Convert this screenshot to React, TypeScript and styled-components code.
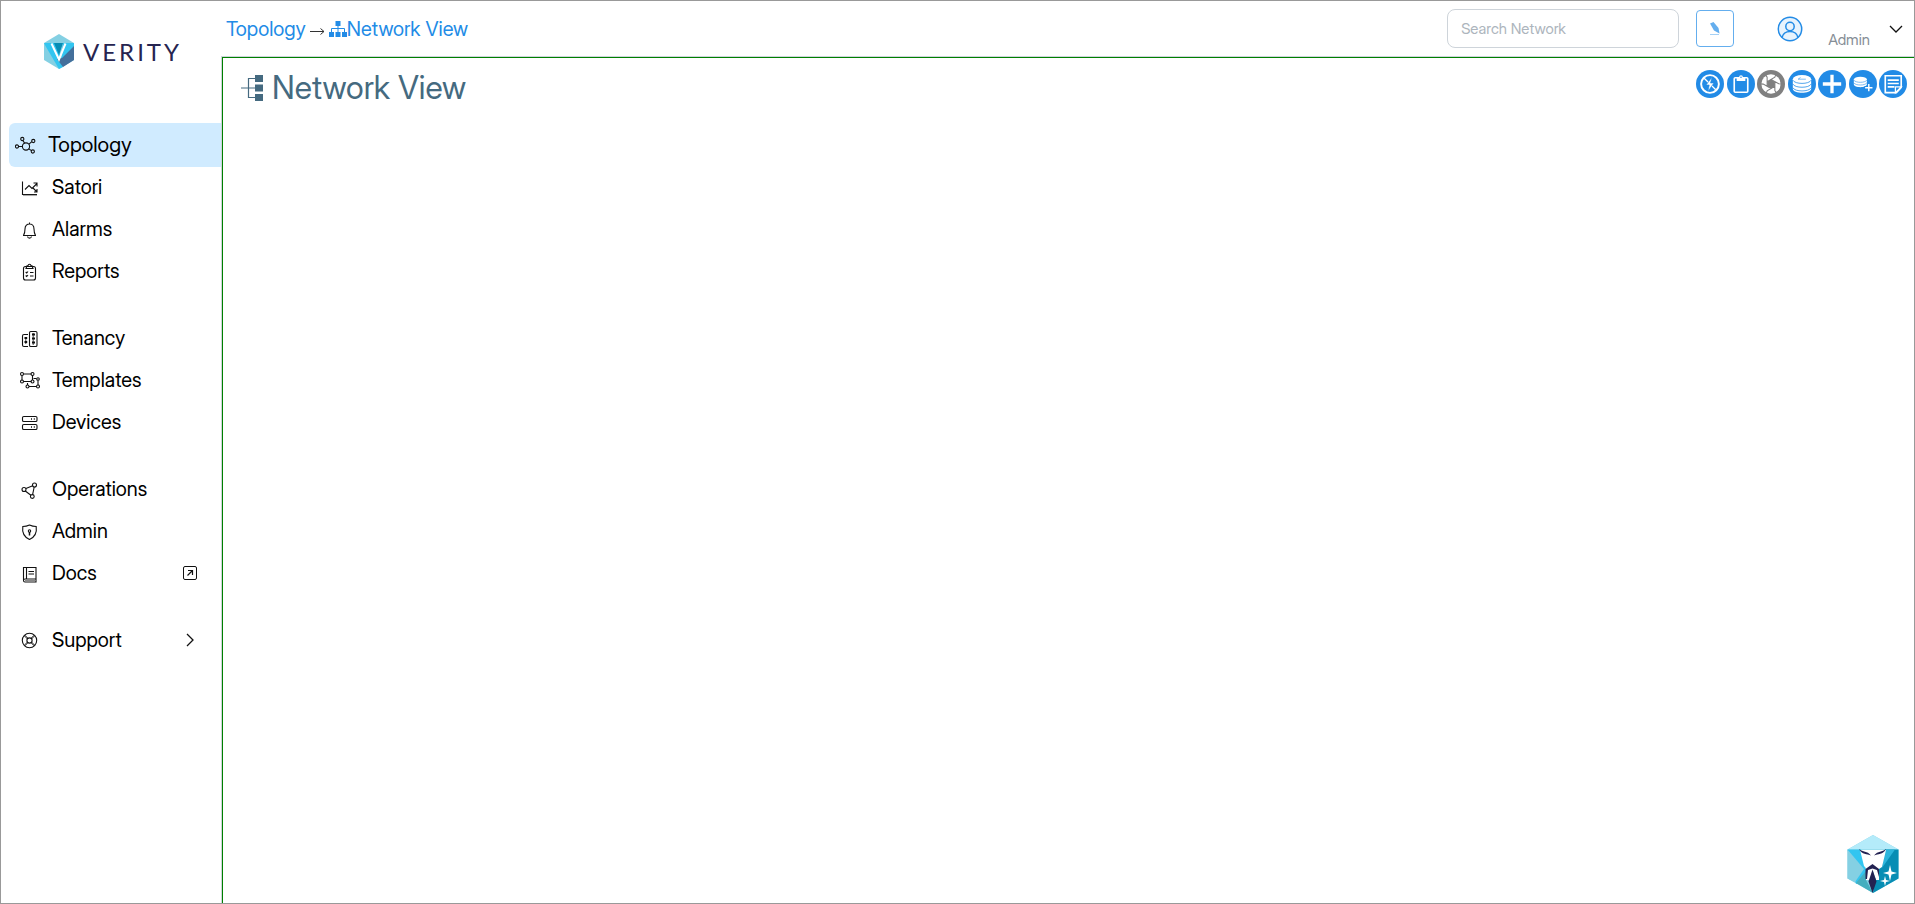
import React from "react";
import styled, { createGlobalStyle, css } from "styled-components";

const BLUE = "#228be6";

const GlobalStyle = createGlobalStyle`
  *, *::before, *::after { box-sizing: border-box; }
  body {
    margin: 0;
    background: #fff;
    color: #000;
    font-family: "Inter Display", Inter, "Liberation Sans", sans-serif;
    font-variation-settings: "opsz" 32;
  }
  a { color: inherit; text-decoration: none; }
  button { font: inherit; font-variation-settings: inherit; cursor: pointer; }
`;

const Shell = styled.div`
  display: flex;
  min-height: 100vh;
  border: 1px solid #999;
`;

const Sidebar = styled.aside`
  flex: 0 0 220px;
  padding-left: 8px;
`;

const Brand = styled.a`
  display: flex;
  align-items: center;
  gap: 9px;
  height: 123px;
  padding: 0 0 22px 35px;
`;

const BrandName = styled.span`
  color: #262450;
  font-family: Lato, sans-serif;
  font-size: 24px;
  letter-spacing: 3px;
  line-height: 32px;
`;

const NavList = styled.ul`
  margin: 0 0 25px;
  padding: 0;
  list-style: none;
`;

const NavLink = styled.a<{ $active?: boolean }>`
  display: flex;
  align-items: center;
  gap: 12px;
  height: 42px;
  padding: 0 24px 0 10px;
  font-size: 20px;
  line-height: 24px;
  ${({ $active }) =>
    $active &&
    css`
      height: 44px;
      margin: -1px 0;
      padding-left: 6px;
      border-radius: 6px 0 0 6px;
      background: #d0ebff;
      font-size: 21px;
    `}
`;

const NavIcon = styled.svg`
  flex: none;
  width: 21px;
  height: 21px;
  margin-top: 2px;
  fill: none;
  stroke: #111;
  stroke-width: 1.1;
`;

const NavText = styled.span`
  flex: 1;
`;

const Content = styled.div`
  display: flex;
  flex: 1;
  flex-direction: column;
  min-width: 0;
`;

const TopBar = styled.header`
  display: flex;
  align-items: center;
  height: 55px;
  padding: 0 11px 0 5px;
`;

const Breadcrumbs = styled.nav`
  display: flex;
  flex: 1;
  align-items: center;
  color: ${BLUE};
  font-size: 20px;
  line-height: 24px;
`;

const Crumb = styled.a`
  display: flex;
  align-items: center;
`;

const Arrow = styled.svg`
  width: 23px;
  height: 20px;
  fill: none;
  stroke: #333;
`;

const SearchBox = styled.input`
  width: 232px;
  height: 39px;
  margin-right: 17px;
  padding: 0 13px;
  border: 1px solid #ced4da;
  border-radius: 8px;
  background: #fff;
  color: #000;
  font-family: inherit;
  font-size: 15px;
  font-variation-settings: inherit;
  &::placeholder { color: #adb5bd; opacity: 1; }
`;

const EditButton = styled.button`
  display: flex;
  align-items: center;
  justify-content: center;
  width: 38px;
  height: 37px;
  padding: 0;
  border: 1px solid #64aeee;
  border-radius: 4px;
  background: #fff;
`;

const AccountButton = styled.button`
  display: flex;
  align-items: center;
  margin-left: 43px;
  padding: 0;
  border: 0;
  background: none;
`;

const UserName = styled.span`
  margin: 22px 19px 0 25px;
  color: #868e96;
  font-size: 15px;
  line-height: 20px;
`;

const Frame = styled.main`
  flex: 1;
  border-top: 1px solid #ced4da;
  border-left: 1px solid #ced4da;
`;

const Workspace = styled.section`
  display: flex;
  align-items: flex-start;
  justify-content: space-between;
  height: 100%;
  padding: 10px 7px 10px 18px;
  border-top: 1px solid #008000;
  border-left: 1px solid #008000;
`;

const Title = styled.h1`
  display: flex;
  align-items: center;
  gap: 9px;
  margin: 0;
  color: #456a80;
  font-size: 32px;
  font-weight: 400;
  line-height: 40px;
`;

const Tools = styled.div`
  display: flex;
  justify-content: space-between;
  width: 211px;
  padding-top: 2px;
`;

const ToolButton = styled.button<{ $muted?: boolean }>`
  width: 28px;
  height: 28px;
  padding: 0;
  border: 0;
  border-radius: 50%;
  background: ${({ $muted }) => ($muted ? "#808080" : BLUE)};
  svg { display: block; fill: none; stroke: #fff; }
`;

const AssistantButton = styled.button`
  position: fixed;
  right: 16px;
  bottom: 11px;
  padding: 0;
  border: 0;
  background: none;
  svg { display: block; }
`;

const icons: Record<string, React.ReactNode> = {
  Topology: (
    <>
      <circle cx="11" cy="10.5" r="3.6" />
      <circle cx="2" cy="10.5" r="1.6" />
      <circle cx="7.3" cy="3" r="1.6" />
      <circle cx="18.3" cy="5" r="1.6" />
      <circle cx="17.8" cy="15.5" r="1.6" />
      <path d="M3.6 10.5h3.8M8 4.5l1.6 2.7M16.8 5.7l-2.8 2.4M16.4 14.6l-2.8-2" />
    </>
  ),
  Satori: (
    <>
      <path d="M3.5 3.5v13h14.5M6 11.5l4-4 3 3 5-5M14.5 5H18v3.5M14 10l4 4M18 11v3h-3" />
      <path d="M4 17.5h14" stroke="#aaa" />
    </>
  ),
  Alarms: (
    <path d="M10.5 2.5v1.500M4 15.5h13M4.500 15.5c1-1.8 1.5-3.3 1.500-6.5 0-6.700 9-6.700 9 0 0 3.2.5 4.700 1.500 6.500M8.5 16.5c.4 2.2 3.6 2.2 4 0" />
  ),
  Reports: (
    <>
      <rect x="4.5" y="4.5" width="12" height="13.5" rx="2" />
      <path d="M7 6.5l1-2.8h1c.3-2 2.7-2 3 0h1l1 2.8zM6.7 10l1 1L9 9.5M6.7 13.5l1 1L9 13M11 10.5h3.5M11 14h3.5" />
    </>
  ),
  Tenancy: (
    <>
      <rect x="10.5" y="2.5" width="7.5" height="15" rx="1.3" />
      <path d="M9 5.5H5Q3.5 5.5 3.5 7v9Q3.5 17.5 5 17.5h4" />
      <g strokeWidth="1.8">
        <path d="M13 5.5h3M13 9.5h3M13 13.5h3M5.5 9h2.7M5.5 13h2.7" />
      </g>
      <path d="M14.2 4v12M6.8 8v7" strokeWidth=".8" />
    </>
  ),
  Templates: (
    <>
      <path d="M3 4.5v5M4.5 3h8M4.5 10.5h8M13.5 4.5v4.500M14.500 7.500h3M19 9.500v4.500M10 15.5h7M8.500 12v2" />
      <circle cx="3" cy="3" r="1.5" />
      <circle cx="13.5" cy="3" r="1.5" />
      <circle cx="3" cy="10.5" r="1.5" />
      <circle cx="13.5" cy="10.5" r="1.5" />
      <circle cx="19" cy="8" r="1.3" />
      <circle cx="8.5" cy="15.5" r="1.5" />
      <circle cx="19" cy="15.5" r="1.5" />
    </>
  ),
  Devices: (
    <>
      <rect x="3.5" y="3.5" width="14.500" height="5" rx="1.3" />
      <rect x="3.5" y="11.5" width="14.500" height="5" rx="1.3" />
      <path d="M12 6h1M14.8 6h1M12 14h1M14.8 14h1" strokeWidth="1.400" />
    </>
  ),
  Operations: (
    <>
      <circle cx="5" cy="9.5" r="2" />
      <circle cx="15.5" cy="5" r="2" />
      <circle cx="13.3" cy="16.5" r="1.9" />
      <path d="M6.9 8.6l6.8-2.9M15.2 7l-1.6 7.6M6.3 11l5.6 4.3" />
    </>
  ),
  Admin: (
    <>
      <path d="M10.500 3c2.500 1.200 4.400 1.500 6.700 1.500.8 5.500-1.300 10.500-6.700 13C5.100 15 3 10 3.800 4.500 6.100 4.500 8 4.200 10.500 3z" />
      <circle cx="10.500" cy="9" r="1.200" />
      <path d="M10.500 10v3.500" strokeWidth="1.500" />
    </>
  ),
  Docs: (
    <>
      <path d="M4.500 16V3.500h12.500V15H6q-1.500 0-1.500 1.500T6 18h11v-3M7.500 3.500V15M9.500 7.500H15M9.500 10H15" />
      <path d="M6 16.500h10.500" stroke="#888" />
    </>
  ),
  Support: (
    <>
      <circle cx="10.500" cy="9.500" r="7.200" />
      <circle cx="10.500" cy="9.500" r="2.600" />
      <path d="M5.300 4.800l3.200 3.200M5.900 4.200l3.200 3.200M15.700 4.800L12.500 8M15.100 4.200l-3.200 3.200M5.300 14.200L8.500 11M5.900 14.800l3.200-3.200M15.700 14.200L12.500 11M15.100 14.800l-3.200-3.200" strokeWidth=".9" />
    </>
  ),
};

const groups = [
  ["Topology", "Satori", "Alarms", "Reports"],
  ["Tenancy", "Templates", "Devices"],
  ["Operations", "Admin", "Docs"],
  ["Support"],
];

const tools: { name: string; muted?: boolean; drawing: React.ReactNode }[] = [
  {
    name: "Power state",
    drawing: (
      <>
        <circle cx="14.500" cy="14.500" r="9.200" strokeWidth="2" />
        <path d="M8.500 8.500l12 12" strokeWidth="1.300" />
        <path d="M16.500 7.500l-6 8h3.200l-1.200 6.500 6-8.500h-3.500z" fill="#fff" stroke={BLUE} strokeWidth=".6" />
      </>
    ),
  },
  {
    name: "Clipboard",
    drawing: (
      <>
        <rect x="7.500" y="8" width="14" height="15" rx="1" strokeWidth="1.700" />
        <path d="M10 11.500V8h2.500V7.500a2 2 0 0 1 4 0V8H19v3.500z" fill="#fff" stroke="none" />
        <circle cx="14.500" cy="7.500" r=".8" fill={BLUE} stroke="none" />
      </>
    ),
  },
  {
    name: "Snapshot",
    muted: true,
    drawing: (
      <>
        <circle cx="14.500" cy="14.500" r="10" fill="#fff" stroke="none" />
        <path d="M14.500 9.800l4 2.300v4.700l-4 2.400-4-2.400v-4.700z" fill="#808080" stroke="none" />
        <path
          d="M10.500 12.100L18.500 7.500l1-3M14.500 9.800l8 4.500 3 .2M18.500 12.100v9.200l2 3M18.500 16.800l-8 4.700-1 3M14.500 19.200l-8-4.600-3-.2M10.500 16.800V7.500l-2-3"
          stroke="#808080"
          strokeWidth="1.100"
        />
      </>
    ),
  },
  {
    name: "Datastore",
    drawing: (
      <>
        <path d="M5 9.500v10c0 5.500 19 5.500 19 0v-10z" fill="#fff" stroke="none" />
        <ellipse cx="14.500" cy="9.500" rx="9.500" ry="4.300" fill="#fff" stroke="none" />
        <path d="M5 10.500c2 4.500 17 4.500 19 0M5 14.500c2 4.500 17 4.500 19 0M5 18.300c2 4.500 17 4.500 19 0" stroke={BLUE} strokeWidth=".8" />
        <path d="M10.500 9.500h8M13 7.800l-2.500 1.700" stroke={BLUE} strokeWidth=".6" />
      </>
    ),
  },
  { name: "Add", drawing: <path d="M14.500 5v19M5 14.500h19" strokeWidth="3.400" /> },
  {
    name: "Add datastore",
    drawing: (
      <>
        <path d="M5 9.800v5c0 4 13.500 4 13.500 0v-5z" fill="#fff" stroke="none" />
        <ellipse cx="11.800" cy="9.800" rx="6.800" ry="2.800" fill="#fff" stroke="none" />
        <path d="M5 10.500c2 3 11.500 3 13.500 0M5 13.300c2 3 11.500 3 13.500 0" stroke={BLUE} strokeWidth=".6" />
        <path d="M20.500 14v8.500M16 18.300h9" strokeWidth="3.200" stroke={BLUE} />
        <path d="M20.500 14.500v7.500M16.700 18.300h7.600" strokeWidth="1.500" />
      </>
    ),
  },
  {
    name: "Notes",
    drawing: (
      <>
        <path d="M6.500 6h16.500V18l-5 5.500H6.500z" strokeWidth="1.700" />
        <path d="M9 10.500h11.500M9 14h11.500M9 17.500h7" strokeWidth="1.600" />
        <path d="M17 23.500V17.500h6z" fill={BLUE} strokeWidth="1.300" />
      </>
    ),
  },
];

export default function App() {
  return (
    <>
      <GlobalStyle />
      <Shell>
        <Sidebar>
          <Brand href="#">
            <svg width="30" height="35" viewBox="0 0 30 35" aria-hidden="true">
              <path d="M15 0l15 9v17l-15 9-15-9V9z" fill="#84d0e3" />
              <path d="M0 9h13l6 24-4 2L1.500 12z" fill="#32c5f0" />
              <path d="M19 9h11v4L17 27z" fill="#32c5f0" />
              <path d="M30 12v14l-11 7-6-8 5-1z" fill="#446f9b" />
              <path d="M10 9h9l-4 12z" fill="#078db4" />
              <path d="M7.500 9.500l7.500 16L21.500 9.500" fill="none" stroke="#fff" strokeWidth="2" />
            </svg>
            <BrandName>VERITY</BrandName>
          </Brand>
          <nav aria-label="Main">
            {groups.map((group) => (
              <NavList key={group[0]}>
                {group.map((label) => (
                  <li key={label}>
                    <NavLink href="#" $active={label === "Topology"}>
                      <NavIcon viewBox="0 0 21 21" aria-hidden="true">
                        {icons[label]}
                      </NavIcon>
                      <NavText>{label}</NavText>
                      {label === "Docs" && (
                        <svg width="14" height="14" viewBox="0 0 14 14" fill="none" stroke="#111" aria-hidden="true">
                          <rect x=".5" y=".5" width="13" height="13" rx="1.500" />
                          <path d="M4.500 9.500l5-5M5 4.500h4.500V9" strokeWidth="1.200" />
                        </svg>
                      )}
                      {label === "Support" && (
                        <svg width="14" height="14" viewBox="0 0 14 14" fill="none" stroke="#111" strokeWidth="1.300" aria-hidden="true">
                          <path d="M4 1l6 6-6 6" />
                        </svg>
                      )}
                    </NavLink>
                  </li>
                ))}
              </NavList>
            ))}
          </nav>
        </Sidebar>
        <Content>
          <TopBar>
            <Breadcrumbs aria-label="Breadcrumb">
              <Crumb href="#">Topology</Crumb>
              <Arrow viewBox="0 0 23 20" aria-hidden="true">
                <path d="M4 12.500h14M14.500 9.500l3.500 3-3.500 3" />
              </Arrow>
              <Crumb href="#">
                <svg width="18" height="16" viewBox="0 0 18 16" fill={BLUE} aria-hidden="true">
                  <path d="M6.500 0h5v5h-5zM0 11h5v5H0zM6.500 11h5v5h-5zM13 11h5v5h-5z" />
                  <path d="M2.500 12V7.500h13V12M9 4v8" fill="none" stroke={BLUE} />
                </svg>
                Network View
              </Crumb>
            </Breadcrumbs>
            <SearchBox type="search" placeholder="Search Network" aria-label="Search Network" />
            <EditButton aria-label="Edit">
              <svg width="12" height="14" viewBox="0 0 12 14" fill="#64aeee" aria-hidden="true">
                <path d="M1 1.500L4.500 0l5 6L10.500 11.500 5 8.500z" />
                <path d="M1 12.500h9" stroke="#a5d0f5" />
              </svg>
            </EditButton>
            <AccountButton aria-label="Admin account">
              <svg width="26" height="26" viewBox="0 0 26 26" fill="none" stroke={BLUE} strokeWidth="1.500" aria-hidden="true">
                <circle cx="13" cy="13" r="11.700" fill="#e7f3fd" />
                <circle cx="13" cy="10.500" r="4.200" />
                <path d="M5 21.500c2-8 14-8 16 0" />
              </svg>
              <UserName>Admin</UserName>
              <svg width="14" height="8" viewBox="0 0 14 8" fill="none" stroke="#111" strokeWidth="1.300" aria-hidden="true">
                <path d="M1 1l6 6 6-6" />
              </svg>
            </AccountButton>
          </TopBar>
          <Frame>
            <Workspace>
              <Title>
                <svg width="22" height="26" viewBox="0 0 22 26" fill="#456a80" aria-hidden="true">
                  <path d="M14 0h8v7h-8zM14 9.500h8v7h-8zM14 19h8v7h-8z" />
                  <path d="M14 3.500H7.500v19H14M0 13h14" fill="none" stroke="#456a80" strokeWidth="1.200" />
                </svg>
                Network View
              </Title>
              <Tools>
                {tools.map((tool) => (
                  <ToolButton key={tool.name} aria-label={tool.name} $muted={tool.muted}>
                    <svg width="28" height="28" viewBox="0 0 29 29" aria-hidden="true">
                      {tool.drawing}
                    </svg>
                  </ToolButton>
                ))}
              </Tools>
            </Workspace>
          </Frame>
        </Content>
      </Shell>
      <AssistantButton aria-label="Assistant">
        <svg width="52" height="58" viewBox="0 0 52 58" aria-hidden="true">
          <path d="M26 0l25.500 14.500v29L26 58 .5 43.500v-29z" fill="#84d0e3" />
          <path d="M26 0l25.500 14.500H.5z" fill="#b4ebfa" />
          <path d="M51.500 14.500v29L26 58l2-18 10-25.500z" fill="#078db4" />
          <path d="M38 14.500h10L35 33z" fill="#2cb5dc" />
          <path d="M.5 14.500H14L19 36v8L9 49z" fill="#32c5f0" />
          <path d="M.5 14.500L17 34 8 47 .5 43.500z" fill="#84d0e3" />
          <path d="M9 48l10-12v9l7 13z" fill="#45aebf" />
          <path d="M13 15h26l-4 17-3 2v11h-3l-3-9-3 9h-4V33l-2-2z" fill="#fff" />
          <path d="M12 14c4 3.500 8 1.500 12 6.500-4-2-9-.5-12-6.500zM39 14c-4 3.500-8 1.500-12 6.500 4-2 9-.5 12-6.500zM18.500 44V34l7-5 6.500 5v8l-2-7-4.500-1.500-4.500 1.500-1 9zM25.500 34.500l4 12-4 11.500-4-11.500z" fill="#232252" />
          <path d="M43 30l1.500 6.500L50 38l-5.500 1.500L43 46l-1.500-6.500L36 38l5.500-1.500zM38 41l1 4 4 1-4 1-1 4-1-4-4-1 4-1z" fill="#fff" />
        </svg>
      </AssistantButton>
    </>
  );
}
